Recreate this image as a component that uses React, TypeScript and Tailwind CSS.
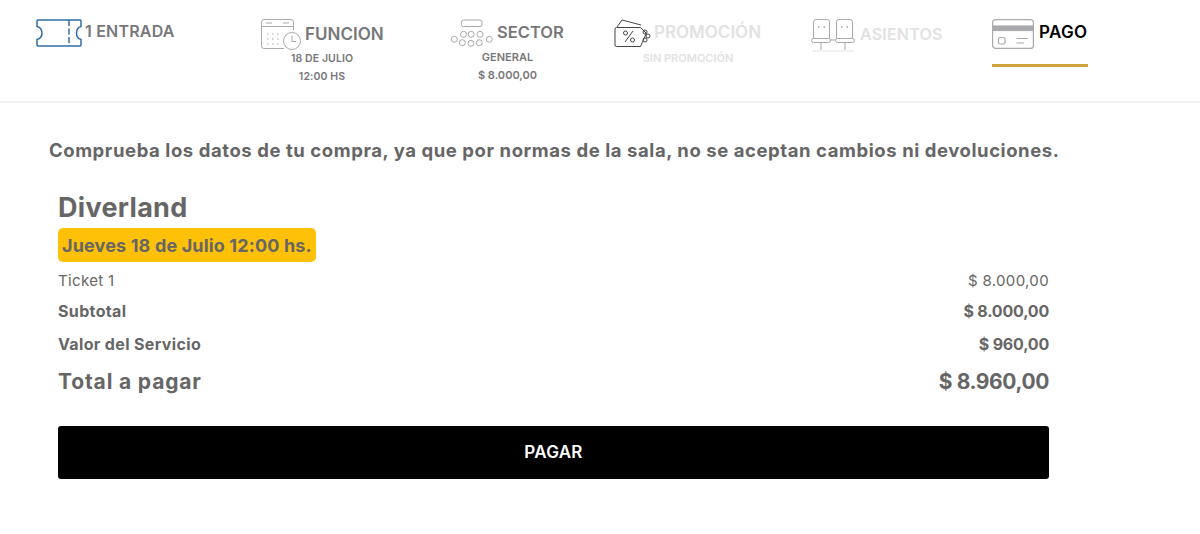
const font = { fontFamily: '"Inter", "Liberation Sans", sans-serif' }

const TicketIcon = () => (
  <svg width="46" height="28" viewBox="0 0 46 28" fill="none" stroke="#2f6ea5" strokeWidth="1.500">
    <path d="M2 1h42a1.500 1.500 0 0 1 1 1v5.500c-3 .8-4.500 3.200-4.500 6.500s1.500 5.700 4.500 6.500V26a1.500 1.500 0 0 1-1 1H2a1.500 1.500 0 0 1-1-1v-5.500c3-.8 5-3.200 5-6.500S4 8.300 1 7.500V2a1.500 1.500 0 0 1 1-1z" />
    <path d="M33 1v26" strokeDasharray="6 2.500" />
  </svg>
)

const CalendarIcon = () => (
  <svg width="40" height="31" viewBox="0 0 40 31" fill="none" stroke="#a9a9ae" strokeWidth="1">
    <path d="M23 29.500H3a2.500 2.500 0 0 1-2.500-2.500V3A2.500 2.500 0 0 1 3 .5h27A2.500 2.500 0 0 1 32.500 3v8" />
    <path d="M.5 7.500h32" />
    <path d="M5 4h6M22 4h6" />
    <path d="M6 15h1.500M11 15h1.500M16 15h1.500M6 20h1.500M11 20h1.500M16 20h1.500M6 25h1.500M11 25h1.500M16 25h1.500" strokeDasharray="1.500 1" />
    <circle cx="31" cy="22" r="8.500" />
    <path d="M31 16.500V22.500h4" />
  </svg>
)

const SeatsMapIcon = () => (
  <svg width="44" height="28" viewBox="0 0 44 28" fill="none" stroke="#a9a9ae" strokeWidth="1">
    <rect x="11.500" y="1" width="20.500" height="6.500" rx="2" />
    <circle cx="13.500" cy="15.300" r="3" />
    <circle cx="21.200" cy="15.300" r="3" />
    <circle cx="30" cy="15.300" r="3" />
    <circle cx="4.300" cy="20.300" r="3" />
    <circle cx="12.300" cy="23.700" r="3" />
    <circle cx="21" cy="24.300" r="3" />
    <circle cx="29.300" cy="23.700" r="3" />
    <circle cx="39.300" cy="20.300" r="3" />
  </svg>
)

const PromoIcon = () => (
  <svg width="37" height="29" viewBox="0 0 37 29" fill="none" stroke="#444" strokeWidth="1">
    <path d="M3 8 8 1l19 5" />
    <path d="M2.500 8.500h24l5.500 5.500v1L26.500 27.500h-24a1.500 1.500 0 0 1-1.500-1.500V10a1.500 1.500 0 0 1 1.500-1.500z" />
    <path d="M11 23 19 12" />
    <circle cx="11.500" cy="14" r="2" />
    <circle cx="18.500" cy="21" r="2" />
    <circle cx="31" cy="13" r="2" />
    <circle cx="34" cy="17" r="2" />
    <circle cx="31" cy="21" r="2" />
  </svg>
)

const ChairsIcon = () => (
  <svg width="44" height="33" viewBox="0 0 44 33" fill="none" stroke="#a9a9ae" strokeWidth="1">
    <rect x="2.500" y="0.500" width="16" height="20" rx="2.500" />
    <rect x="25.500" y="0.500" width="16" height="20" rx="2.500" />
    <rect x="0.500" y="19.500" width="19" height="4" rx="2" fill="#fff" />
    <rect x="24.500" y="19.500" width="19" height="4" rx="2" fill="#fff" />
    <path d="M19.500 21h5M10 24v7M34 24v7" />
    <path d="M1 32h42" stroke="#e2e2e2" />
    <path d="M7 8h1.500M12.500 8H14M30 8h1.500M35.500 8H37" stroke="#777" />
  </svg>
)

const CardIcon = () => (
  <svg width="42" height="30" viewBox="0 0 42 30" fill="none" stroke="#a9a9ae" strokeWidth="1.200">
    <rect x="0.600" y="0.600" width="40.800" height="28.800" rx="3" />
    <rect x="0.600" y="7" width="40.800" height="4.500" fill="#a9a9ae" />
    <rect x="6.500" y="18.500" width="6.500" height="6.500" rx="1.500" />
    <path d="M24.500 19.500H36M24.500 24H32" />
  </svg>
)

const Sub = ({ children, className }: { children: React.ReactNode; className: string }) => (
  <p className={`leading-[18px] font-semibold text-center whitespace-nowrap ${className}`}>{children}</p>
)

const Row = ({ label, value, className, labelClass, valueClass }: { label: string; value: string; className: string; labelClass?: string; valueClass?: string }) => (
  <div className={`flex justify-between items-center ${className}`}>
    <span className={labelClass}>{label}</span>
    <span className={valueClass}>{value}</span>
  </div>
)

export default function App() {
  return (
    <div style={font} className="w-[1200px] h-[534px] bg-white overflow-hidden text-[#666]">
      {/* steps */}
      <header className="h-[103px] border-b-2 border-[#f3f3f3] pl-[36px] pt-[19px] flex items-start">
        <div className="w-[225px] flex items-start gap-[3px]">
          <TicketIcon />
          <span className="text-[16px] leading-[24px] font-semibold tracking-[0.2px] text-[#77777a] whitespace-nowrap">1 ENTRADA</span>
        </div>

        <div className="w-[189px]">
          <div className="flex items-start gap-[4px]">
            <CalendarIcon />
            <span className="text-[17px] leading-[30px] font-semibold text-[#77777a]">FUNCION</span>
          </div>
          <div className="w-[122px]">
            <Sub className="text-[10.500px] tracking-[0.1px] text-[#77777a]">18 DE JULIO</Sub>
            <Sub className="text-[10.500px] tracking-[0.1px] text-[#77777a]">12:00 HS</Sub>
          </div>
        </div>

        <div className="w-[164px]">
          <div className="flex items-start gap-[3px]">
            <SeatsMapIcon />
            <span className="text-[16.500px] leading-[27px] font-semibold text-[#77777a]">SECTOR</span>
          </div>
          <div className="w-[115px] mt-[1px]">
            <Sub className="text-[11px] text-[#77777a]">GENERAL</Sub>
            <Sub className="text-[11px] text-[#77777a]">$ 8.000,00</Sub>
          </div>
        </div>

        <div className="w-[197px]">
          <div className="flex items-start gap-[3px]">
            <PromoIcon />
            <span className="text-[17px] leading-[26px] font-semibold text-[#e2e2e2]">PROMOCIÓN</span>
          </div>
          <div className="w-[148px] mt-[1px]">
            <Sub className="text-[11px] text-[#e2e2e2]">SIN PROMOCIÓN</Sub>
          </div>
        </div>

        <div className="w-[181px] flex items-start gap-[5px]">
          <ChairsIcon />
          <span className="text-[16px] leading-[30px] font-semibold tracking-[0.2px] text-[#e2e2e2]">ASIENTOS</span>
        </div>

        <div className="w-[96px]">
          <div className="flex items-start gap-[5px]">
            <CardIcon />
            <span className="text-[17px] leading-[26px] font-semibold tracking-[0.3px] text-black">PAGO</span>
          </div>
          <div className="h-[3px] bg-[#cfa63c] mt-[15px]" />
        </div>
      </header>

      {/* summary */}
      <main className="pl-[49px] pt-[35px]">
        <p className="text-[18.500px] leading-[24px] font-bold tracking-[0.57px] whitespace-nowrap">
          Comprueba los datos de tu compra, ya que por normas de la sala, no se aceptan cambios ni devoluciones.
        </p>

        <div className="ml-[9px] w-[991px] mt-[30px]">
          <h2 className="text-[27px] leading-[32px] font-bold tracking-[0.3px]">Diverland</h2>
          <div className="mt-[4px] w-fit bg-[#ffc107] rounded-[5px] h-[34px] px-[4px] flex items-center text-[18px] font-bold tracking-[0.15px] whitespace-nowrap">
            Jueves 18 de Julio 12:00 hs.
          </div>
          <Row label="Ticket 1" value="$ 8.000,00" className="mt-[7px] h-[24px] text-[15px] tracking-[0.35px]" />
          <Row label="Subtotal" value="$ 8.000,00" labelClass="tracking-[0.35px]" valueClass="tracking-[-0.2px]" className="mt-[6px] h-[24px] text-[16px] font-bold" />
          <Row label="Valor del Servicio" value="$ 960,00" labelClass="tracking-[0.35px]" valueClass="tracking-[-0.2px]" className="mt-[9px] h-[24px] text-[16px] font-bold" />
          <Row label="Total a pagar" value="$ 8.960,00" labelClass="tracking-[0.85px]" valueClass="tracking-[-0.4px]" className="mt-[10px] h-[32px] text-[21px] font-bold" />
          <button className="mt-[28px] w-full h-[53px] bg-black text-white rounded-[3px] text-[17px] font-semibold tracking-[0.3px]">PAGAR</button>
        </div>
      </main>
    </div>
  )
}
